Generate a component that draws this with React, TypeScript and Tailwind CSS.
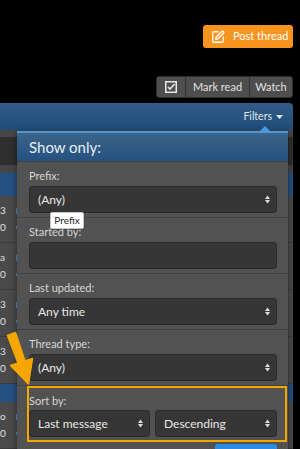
import { SquarePen } from 'lucide-react'

const font = { fontFamily: 'Lato, "Open Sans", sans-serif' }

function Chevrons() {
  return (
    <svg width="5" height="9" viewBox="0 0 5 9" className="shrink-0">
      <path d="M0 4 L2.5 0.5 L5 4 Z M0 5 L2.5 8.5 L5 5 Z" fill="#dcdcdc" />
    </svg>
  )
}

function Select({ value, className = '' }: { value: string; className?: string }) {
  return (
    <div
      className={`flex h-[27px] items-center justify-between rounded-[3px] border border-[#2b2b2b] bg-[#363636] pl-[8px] pr-[6px] text-[12px] text-[#e8e8e8] ${className}`}
    >
      <span>{value}</span>
      <Chevrons />
    </div>
  )
}

function Section({ label, children }: { label: string; children: React.ReactNode }) {
  return (
    <div className="border-t border-[#414141] px-[12px] pb-[4px] pt-[7px] pr-[11px]">
      <div className="h-[14px] text-[11px] leading-[14px] text-[#d6d6d6]">{label}</div>
      <div className="mt-[3px]">{children}</div>
    </div>
  )
}

function ListRow({ top = '3' }: { top?: string }) {
  return (
    <div className="relative flex h-[47px] flex-col justify-center gap-[4px] border-b border-[#3b3b3b] bg-[#4a4a4a] text-[10px] leading-[13px] text-[#e0e0e0]">
      <span>{top}</span>
      <span>0</span>
      <div className="absolute left-[16px] top-[12px] h-[6px] w-[1px] bg-[#4f8fd0]" />
      <div className="absolute left-[16px] top-[30px] h-[3px] w-[1px] bg-[#4f8fd0]" />
    </div>
  )
}

export default function App() {
  return (
    <div className="relative h-[449px] w-[300px] overflow-hidden bg-black" style={font}>
      <div className="flex justify-end pr-[7px] pt-[25px]">
        <div className="flex h-[23px] w-[90px] items-center gap-[8px] rounded-[3px] bg-[#f7941d] pl-[8px] text-[11px] text-white">
          <SquarePen size={14} strokeWidth={2.2} />
          <span>Post thread</span>
        </div>
      </div>

      <div className="mt-[28px] flex justify-end pr-[7px]">
        <div className="flex h-[22px] overflow-hidden rounded-[3px] border border-[#2f2f2f] bg-[#4e4e4e] text-[11px] text-[#e2e2e2]">
          <div className="flex w-[29px] items-center justify-center border-r border-[#333]">
            <svg width="12" height="12" viewBox="0 0 12 12">
              <rect x="0.75" y="0.75" width="10.5" height="10.5" fill="none" stroke="#e8e8e8" strokeWidth="1.5" />
              <path d="M3 6 L5 8 L9.5 3" fill="none" stroke="#e8e8e8" strokeWidth="1.6" />
            </svg>
          </div>
          <div className="flex w-[64px] items-center justify-center border-r border-[#333]">Mark read</div>
          <div className="flex w-[42px] items-center justify-center">Watch</div>
        </div>
      </div>

      <div className="mt-[5px] w-[293px]">
        <div className="flex h-[27px] items-center justify-end gap-[4px] rounded-tr-[4px] bg-gradient-to-b from-[#305c87] to-[#204c78] pr-[10px] text-[10.5px] text-[#dfe8f2]">
          <span>Filters</span>
          <svg width="7" height="4" viewBox="0 0 7 4">
            <path d="M0 0 L7 0 L3.5 4 Z" fill="#e6eef6" />
          </svg>
        </div>
        <div className="h-[7px] bg-[#464646]" />
        <div className="h-[28px] bg-[#2f2f2f]" />
        <div className="h-[8px] bg-[#464646]" />
        <div className="h-[23px] bg-[#245181]" />
        <ListRow />
        <ListRow top="a" />
        <ListRow />
        <ListRow />
        <div className="h-[18px] bg-[#245181]" />
        <ListRow top="o" />
      </div>

      {/* filter menu */}
      <div className="absolute left-[17px] top-[131px] w-[271px] border-t-2 border-[#4a9ae0] bg-[#525252] shadow-[0_2px_6px_rgba(0,0,0,0.5)]">
        <svg width="10" height="5" viewBox="0 0 10 5" className="absolute -top-[7px] left-[243px]">
          <path d="M0 5 L5 0 L10 5 Z" fill="#4a9ae0" />
        </svg>
        <div className="flex h-[28px] items-center bg-gradient-to-b from-[#3d6488] to-[#245180] pl-[12px] text-[15px] text-[#e8eef5]">
          Show only:
        </div>
        <Section label="Prefix:">
          <Select value="(Any)" />
        </Section>
        <Section label="Started by:">
          <div className="h-[27px] rounded-[3px] border border-[#2b2b2b] bg-[#363636]" />
        </Section>
        <Section label="Last updated:">
          <Select value="Any time" />
        </Section>
        <Section label="Thread type:">
          <Select value="(Any)" />
        </Section>
        <div className="border-t border-[#414141] px-[12px] pb-[7px] pr-[11px] pt-[8px]">
          <div className="h-[14px] text-[11px] leading-[14px] text-[#d6d6d6]">Sort by:</div>
          <div className="mt-[2px] flex gap-[5px]">
            <Select value="Last message" className="w-[121px]" />
            <Select value="Descending" className="flex-1" />
          </div>
        </div>
        <div className="flex justify-end pr-[11px]">
          <div className="h-[24px] w-[62px] rounded-t-[3px] bg-[#2f8be0]" />
        </div>
      </div>

      {/* annotation box */}
      <div className="absolute left-[27px] top-[386px] h-[56px] w-[260px] border-2 border-[#f5a700]" />

      {/* tooltip */}
      <div className="absolute left-[50px] top-[212px] flex h-[17px] w-[34px] items-center justify-center rounded-[2px] border border-[#c8c8c8] bg-white text-[10px] text-[#222] shadow">
        Prefix
      </div>

      {/* annotation arrow */}
      <svg width="40" height="60" viewBox="0 330 40 60" className="absolute left-0 top-[330px]">
        <path
          d="M7.5 335.5 L15.5 332.5 L25 361 L32.5 358.5 L28.5 384 L10.5 365.5 L18 363 Z"
          fill="#f5a700"
          stroke="#f5a700"
          strokeWidth="1.5"
          strokeLinejoin="round"
        />
      </svg>
    </div>
  )
}
